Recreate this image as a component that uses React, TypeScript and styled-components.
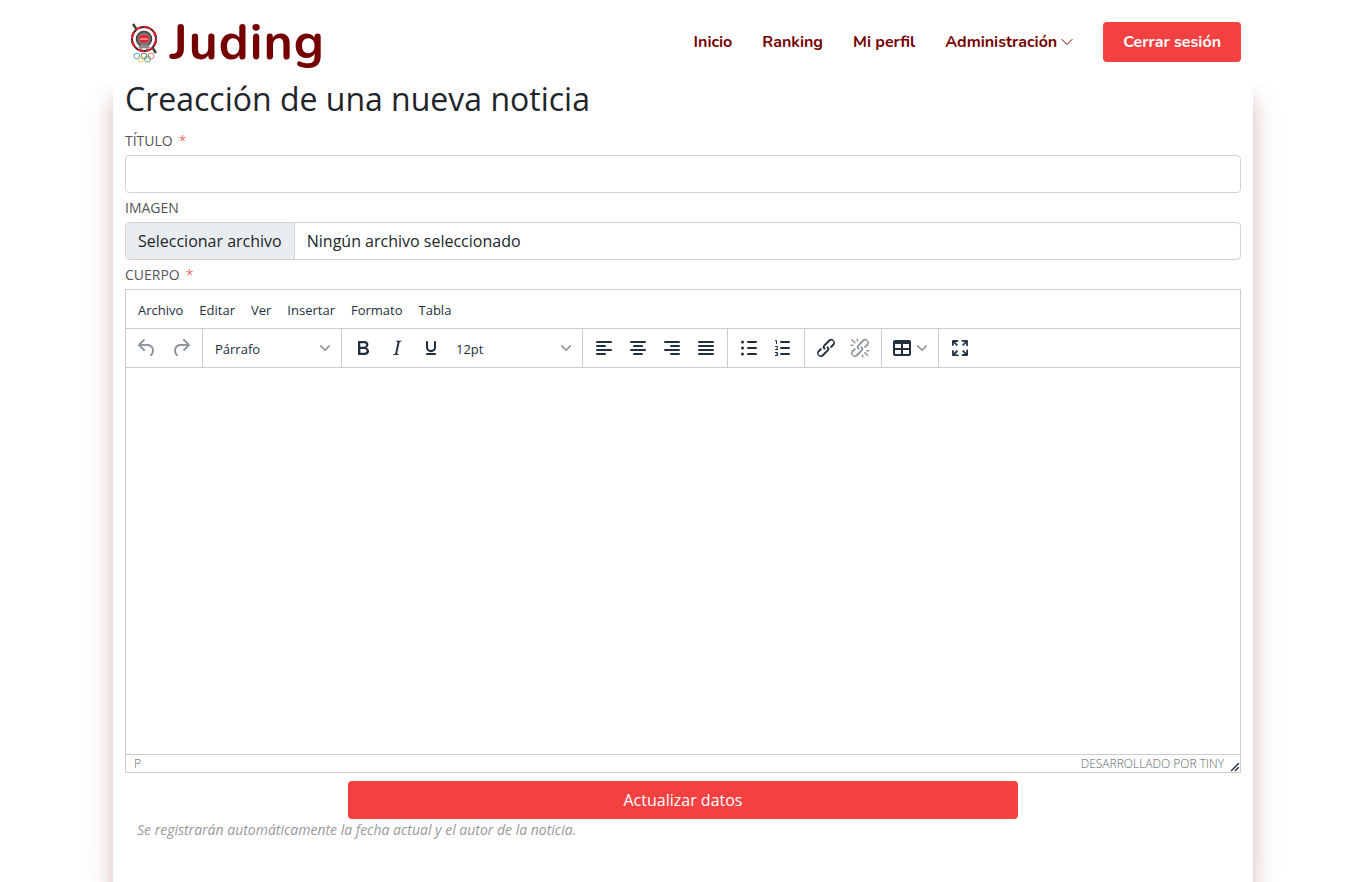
import React from "react";
import styled, { createGlobalStyle } from "styled-components";

const brand = "#750000";
const accent = "#f34141";
const ink = "#222f3e";
const line = "#cccccc";
const body = '"Open Sans", "Noto Sans", sans-serif';
const heading = 'Nunito, Lato, "Open Sans", sans-serif';

const GlobalStyle = createGlobalStyle`
  *, *::before, *::after { box-sizing: border-box; }
  html, body, #root { height: 100%; }
  body { margin: 0; background: #fff; color: #212529; font-family: ${body}; font-size: 16px; line-height: 24px; }
  button, input, select, textarea { font: inherit; color: inherit; }
`;

const Page = styled.div`
  display: flex;
  flex-direction: column;
  min-height: 100%;
  overflow: hidden;
`;

const Header = styled.header`
  position: relative;
  z-index: 1;
  background: #fff;
`;

const HeaderInner = styled.div`
  display: flex;
  align-items: center;
  justify-content: space-between;
  max-width: 1140px;
  height: 84px;
  margin: 0 auto;
  padding: 0 12px;
`;

const Logo = styled.a`
  display: flex;
  align-items: center;
  gap: 9px;
  padding: 2px 0 0 4px;
  color: ${brand};
  font-family: ${heading};
  font-size: 50px;
  font-weight: 700;
  line-height: 60px;
  letter-spacing: 1px;
  text-decoration: none;
`;

const Nav = styled.nav`
  display: flex;
  align-items: center;
  gap: 30px;
  font-family: ${heading};
`;

const NavLink = styled.a`
  display: flex;
  align-items: center;
  gap: 4px;
  color: ${brand};
  font-size: 16px;
  font-weight: 700;
  text-decoration: none;
`;

const LogoutButton = styled.button`
  height: 40px;
  padding: 0 20px;
  border: 0;
  border-radius: 4px;
  background: ${accent};
  color: #fff;
  font-weight: 700;
`;

const Main = styled.main`
  flex: 1;
  width: 100%;
  max-width: 1140px;
  margin: 0 auto;
  padding: 0 12px 40px;
  background: #fff;
  box-shadow: 0 16px 20px rgba(140, 0, 10, 0.26), 0 8px 40px rgba(120, 110, 80, 0.06);
`;

const Title = styled.h1`
  margin: 0 0 12px;
  font-size: 32px;
  font-weight: 400;
  line-height: 30px;
`;

const FieldLabel = styled.label`
  display: block;
  color: #555;
  font-size: 14px;
  line-height: 29px;
  text-transform: uppercase;
`;

const Required = styled.span`
  margin-left: 6px;
  color: #ff2b2b;
  font-weight: 300;
`;

const TextInput = styled.input`
  display: block;
  width: 100%;
  height: 38px;
  padding: 0 12px;
  border: 1px solid #ced4da;
  border-radius: 4px;
  background: #fff;
`;

const FileField = styled.label`
  display: flex;
  height: 38px;
  overflow: hidden;
  border: 1px solid #ced4da;
  border-radius: 4px;
  line-height: 36px;
`;

const HiddenFile = styled.input`
  position: absolute;
  width: 1px;
  height: 1px;
  opacity: 0;
`;

const FileButton = styled.span`
  padding: 0 12px;
  border-right: 1px solid #ced4da;
  background: #e9ecef;
`;

const FileName = styled.span`
  padding: 0 12px;
`;

const Editor = styled.section`
  border: 1px solid ${line};
  color: ${ink};
  font-size: 13px;
`;

const MenuBar = styled.div`
  display: flex;
  gap: 8px;
  height: 39px;
  padding: 0 8px;
  border-bottom: 1px solid ${line};
`;

const MenuButton = styled.button`
  padding: 2px 4px 0;
  border: 0;
  background: none;
`;

const Toolbar = styled.div`
  display: flex;
  height: 39px;
  border-bottom: 1px solid ${line};
`;

const Group = styled.div`
  display: flex;
  align-items: center;
  padding: 0 4px;
  border-right: 1px solid ${line};

  &:last-child { border-right: 0; }
`;

const Tool = styled.button<{ $wide?: boolean }>`
  display: flex;
  align-items: center;
  justify-content: ${(p) => (p.$wide ? "flex-start" : "center")};
  gap: 3px;
  width: ${(p) => (p.$wide ? 48 : 34)}px;
  height: 34px;
  padding: 0 ${(p) => (p.$wide ? 4 : 0)}px;
  border: 0;
  background: none;
  color: ${ink};

  &:disabled { color: rgba(34, 47, 62, 0.5); }
`;

const SelectBox = styled.div`
  display: grid;
  align-items: center;
  width: 130px;

  > * { grid-area: 1 / 1; }
  > svg { justify-self: end; margin-right: 7px; pointer-events: none; }
`;

const Select = styled.select`
  width: 100%;
  height: 34px;
  padding: 2px 8px 0;
  border: 0;
  background: none;
  appearance: none;
`;

const Content = styled.textarea`
  display: block;
  width: 100%;
  height: 386px;
  padding: 16px;
  border: 0;
  outline: 0;
  resize: none;
`;

const StatusBar = styled.div`
  display: flex;
  align-items: center;
  height: 18px;
  padding: 0 0 0 8px;
  border-top: 1px solid ${line};
  color: rgba(34, 47, 62, 0.8);
  font-size: 12px;
  font-weight: 300;
  line-height: 18px;
  text-transform: uppercase;

  > svg { align-self: flex-end; }
`;

const Powered = styled.a`
  margin-left: auto;
  margin-right: 6px;
  color: inherit;
  text-decoration: none;
`;

const Submit = styled.button`
  display: block;
  width: 60%;
  height: 38px;
  margin: 8px auto 0;
  border: 0;
  border-radius: 4px;
  background: ${accent};
  color: #fff;
`;

const Note = styled.p`
  margin: 0;
  padding: 0 12px;
  color: #999;
  font-size: 14px;
  font-style: italic;
  line-height: 22px;
`;

const Icon = ({ d, children }: { d?: string; children?: React.ReactNode }) => (
  <svg width="24" height="24" viewBox="0 0 24 24" fill="currentColor" aria-hidden="true">
    {d && <path d={d} />}
    {children}
  </svg>
);

const Chevron = () => (
  <svg width="10" height="10" viewBox="0 0 10 10" fill="#222f3e" opacity="0.5" aria-hidden="true">
    <path d="M8.7 2.2c.3-.3.8-.3 1 0 .4.4.4.9 0 1.2L5.7 7.8c-.3.3-.9.3-1.2 0L.2 3.4a.8.8 0 0 1 0-1.2c.3-.3.8-.3 1.1 0L5 6l3.7-3.8Z" />
  </svg>
);

const Bars = ({ rows }: { rows: [number, number][] }) => (
  <Icon>
    {rows.map(([x, width], i) => (
      <rect key={i} x={x} y={5 + i * 4} width={width} height="2" rx="1" />
    ))}
  </Icon>
);

const linkPath =
  "M6.2 12.3a1 1 0 0 1 1.4 1.4l-2 2a2 2 0 1 0 2.6 2.8l4.8-4.8a1 1 0 0 0 0-1.4 1 1 0 1 1 1.4-1.3 2.9 2.9 0 0 1 0 4L9.6 20a3.9 3.9 0 0 1-5.5-5.5l2-2Zm11.6-.6a1 1 0 0 1-1.4-1.4l2-2a2 2 0 1 0-2.6-2.8L11 10.3a1 1 0 0 0 0 1.4A1 1 0 1 1 9.6 13a2.9 2.9 0 0 1 0-4L14.4 4a3.9 3.9 0 0 1 5.5 5.5l-2 2Z";

const paths = {
  undo: "M6.4 8H12c3.7 0 6.2 2 6.8 5.1.6 2.7-.4 5.6-2.3 6.8a1 1 0 0 1-1-1.8c1.1-.6 1.8-2.7 1.4-4.6-.5-2.1-2.1-3.5-4.9-3.5H6.4l3.3 3.3a1 1 0 1 1-1.4 1.4l-5-5a1 1 0 0 1 0-1.4l5-5a1 1 0 0 1 1.4 1.4L6.4 8Z",
  redo: "M17.6 10H12c-2.8 0-4.4 1.4-4.9 3.5-.4 2 .3 4 1.4 4.6a1 1 0 1 1-1 1.8c-2-1.2-2.9-4.1-2.3-6.8.6-3 3-5.1 6.8-5.1h5.6l-3.3-3.3a1 1 0 1 1 1.4-1.4l5 5a1 1 0 0 1 0 1.4l-5 5a1 1 0 0 1-1.4-1.4l3.3-3.3Z",
  bold: "M7.8 19c-.3 0-.5 0-.6-.2l-.2-.5V5.7c0-.2 0-.4.2-.5l.6-.2h5c1.5 0 2.7.3 3.5 1 .7.6 1.1 1.4 1.1 2.5a3 3 0 0 1-.6 1.9c-.4.6-1 1-1.6 1.2.4.1.9.3 1.3.6s.8.7 1 1.2c.4.4.5 1 .5 1.6 0 1.3-.4 2.3-1.3 3-.8.7-2.1 1-3.8 1H7.8Zm5-8.3c.6 0 1.2-.1 1.6-.5.4-.3.6-.7.6-1.3 0-1.1-.8-1.7-2.3-1.7H9.3v3.5h3.4Zm.5 6c.7 0 1.3-.1 1.7-.4.4-.4.6-.9.6-1.5s-.2-1-.7-1.4c-.4-.3-1-.4-2-.4H9.4v3.8h4Z",
  italic: "M16.7 4.7l-.1.9h-.3c-.6 0-1 0-1.4.3-.3.3-.4.6-.5 1.1l-2.1 9.8v.6c0 .5.4.8 1.4.8h.2l-.2.8H8l.2-.8h.2c1.1 0 1.8-.5 2-1.5l2-9.8.1-.5c0-.6-.4-.8-1.4-.8h-.3l.2-.9h5.8Z",
  underline: "M16 5c.6 0 1 .4 1 1v5.5a4 4 0 0 1-.4 1.8l-1 1.4a5.3 5.3 0 0 1-5.5 1 5 5 0 0 1-1.6-1c-.5-.4-.8-.9-1.1-1.4a4 4 0 0 1-.4-1.8V6c0-.6.4-1 1-1s1 .4 1 1v5.5c0 .3 0 .6.2 1l.6.7a3.3 3.3 0 0 0 2.2.8 3.4 3.4 0 0 0 2.2-.8c.3-.2.4-.5.6-.8l.2-.9V6c0-.6.4-1 1-1ZM8 17h8c.6 0 1 .4 1 1s-.4 1-1 1H8a1 1 0 0 1 0-2Z",
  unlink: linkPath + "M7.6 6.3a.8.8 0 0 1-1 1.1L3.3 4.2a.7.7 0 1 1 1-1l3.2 3.1ZM5.1 8.6a.8.8 0 0 1 0 1.5H3a.8.8 0 0 1 0-1.5H5Zm5-3.5a.8.8 0 0 1-1.5 0V3a.8.8 0 0 1 1.5 0V5Zm6 11.8a.8.8 0 0 1 1-1l3.2 3.2a.8.8 0 0 1-1 1L16 17Zm-2.2 2a.8.8 0 0 1 1.5 0V21a.8.8 0 0 1-1.5 0V19Zm5-3.5a.7.7 0 1 1 0-1.5H21a.8.8 0 0 1 0 1.5H19Z",
  table: "M19 4a2 2 0 0 1 2 2v12a2 2 0 0 1-2 2H5a2 2 0 0 1-2-2V6c0-1.1.9-2 2-2h14ZM5 14v4h6v-4H5Zm14 0h-6v4h6v-4Zm0-6h-6v4h6V8ZM5 12h6V8H5v4Z",
  fullscreen: "M15.3 10l-1.2-1.3 2.9-3h-2.3a.9.9 0 1 1 0-1.7H19c.5 0 .9.4.9.9v4.4a.9.9 0 1 1-1.8 0V7l-2.9 3Zm0 4l3 3v-2.3a.9.9 0 1 1 1.7 0V19c0 .5-.4.9-.9.9h-4.4a.9.9 0 1 1 0-1.8H17l-3-2.9 1.3-1.2ZM10 15.4l-2.9 3h2.3a.9.9 0 1 1 0 1.7H5a.9.9 0 0 1-.9-.9v-4.4a.9.9 0 1 1 1.8 0V17l2.9-3 1.2 1.3ZM8.7 10L5.7 7v2.3a.9.9 0 0 1-1.7 0V5c0-.5.4-.9.9-.9h4.4a.9.9 0 0 1 0 1.8H7l3 2.9-1.3 1.2Z",
};

const Emblem = () => (
  <svg width="32" height="40" viewBox="0 0 32 40" fill="none" aria-hidden="true">
    <path d="M4 1l4 6M23 24l4 6" stroke="#3e4a35" strokeWidth="2.5" />
    <circle cx="15" cy="16" r="12" fill="#fff" stroke="#2b2b2b" strokeWidth="2" />
    <circle cx="15" cy="16" r="12" stroke="#d5202b" strokeWidth="2.2" strokeDasharray="7 2.4" />
    <path d="M10 6l-4 4v12l4 4h10l4-4V10l-4-4z" fill="#fff" />
    <circle cx="15" cy="16" r="7.5" fill="#777" stroke="#3c3c3c" strokeWidth="1.5" />
    <path d="M9 25l2-3h8l2 3-3 1-3-1-3 1z" fill="#8b8b8b" />
    <path d="M10 13q5-2 10 0v5q-5 3-10 0z" fill="#e32632" />
    <path d="M11 15l1 2 1-2 1 2 1-2 1 2 1-2 1 2 1-2" stroke="#f9b4b8" strokeWidth="0.8" />
    <g strokeWidth="1">
      <circle cx="8" cy="33" r="3" stroke="#5aaee0" />
      <circle cx="15" cy="33" r="3" stroke="#777" />
      <circle cx="22" cy="33" r="3" stroke="#ec7a72" />
      <circle cx="11.500" cy="36" r="3" stroke="#e9cc5c" />
      <circle cx="18.500" cy="36" r="3" stroke="#4fae72" />
    </g>
  </svg>
);

const menus = ["Archivo", "Editar", "Ver", "Insertar", "Formato", "Tabla"];

export default function App() {
  return (
    <Page>
      <GlobalStyle />
      <Header>
        <HeaderInner>
          <Logo href="#">
            <Emblem />
            <span>Juding</span>
          </Logo>
          <Nav>
            <NavLink href="#">Inicio</NavLink>
            <NavLink href="#">Ranking</NavLink>
            <NavLink href="#">Mi perfil</NavLink>
            <NavLink href="#">
              Administración
              <svg width="12" height="12" viewBox="0 0 12 12" fill="none" stroke="currentColor" aria-hidden="true">
                <path d="M1 3.500l5 5 5-5" strokeLinecap="round" strokeLinejoin="round" />
              </svg>
            </NavLink>
            <LogoutButton type="button">Cerrar sesión</LogoutButton>
          </Nav>
        </HeaderInner>
      </Header>
      <Main>
        <Title>Creacción de una nueva noticia</Title>
        <form onSubmit={(e) => e.preventDefault()}>
          <FieldLabel htmlFor="titulo">
            Título<Required>*</Required>
          </FieldLabel>
          <TextInput id="titulo" type="text" />
          <FieldLabel htmlFor="imagen">Imagen</FieldLabel>
          <FileField>
            <HiddenFile id="imagen" type="file" />
            <FileButton>Seleccionar archivo</FileButton>
            <FileName>Ningún archivo seleccionado</FileName>
          </FileField>
          <FieldLabel htmlFor="cuerpo">
            Cuerpo<Required>*</Required>
          </FieldLabel>
          <Editor>
            <MenuBar>
              {menus.map((m) => (
                <MenuButton key={m} type="button">{m}</MenuButton>
              ))}
            </MenuBar>
            <Toolbar>
              <Group>
                <Tool type="button" aria-label="Deshacer" disabled><Icon d={paths.undo} /></Tool>
                <Tool type="button" aria-label="Rehacer" disabled><Icon d={paths.redo} /></Tool>
              </Group>
              <Group>
                <SelectBox>
                  <Select aria-label="Bloque"><option>Párrafo</option></Select>
                  <Chevron />
                </SelectBox>
              </Group>
              <Group>
                <Tool type="button" aria-label="Negrita"><Icon d={paths.bold} /></Tool>
                <Tool type="button" aria-label="Cursiva"><Icon d={paths.italic} /></Tool>
                <Tool type="button" aria-label="Subrayado"><Icon d={paths.underline} /></Tool>
                <SelectBox>
                  <Select aria-label="Tamaño"><option>12pt</option></Select>
                  <Chevron />
                </SelectBox>
              </Group>
              <Group>
                <Tool type="button" aria-label="Alinear a la izquierda"><Bars rows={[[4, 16], [4, 10], [4, 16], [4, 10]]} /></Tool>
                <Tool type="button" aria-label="Centrar"><Bars rows={[[4, 16], [7, 10], [4, 16], [7, 10]]} /></Tool>
                <Tool type="button" aria-label="Alinear a la derecha"><Bars rows={[[4, 16], [10, 10], [4, 16], [10, 10]]} /></Tool>
                <Tool type="button" aria-label="Justificar"><Bars rows={[[4, 16], [4, 16], [4, 16], [4, 16]]} /></Tool>
              </Group>
              <Group>
                <Tool type="button" aria-label="Lista de viñetas">
                  <Icon>
                    {[6, 12, 18].map((y) => (
                      <g key={y}>
                        <circle cx="5.500" cy={y} r="1.500" />
                        <rect x="10" y={y - 1} width="10" height="2" rx="1" />
                      </g>
                    ))}
                  </Icon>
                </Tool>
                <Tool type="button" aria-label="Lista numerada">
                  <Icon>
                    {[6, 12, 18].map((y) => (
                      <rect key={y} x="9" y={y - 1} width="10" height="2" rx="1" />
                    ))}
                    <path d="M4 4.500h1.500V8M4 10.500h2.500v1.500L4.500 13.500h2.500M4 16.500h2.500v3H4M5 18h1.500" fill="none" stroke="currentColor" strokeWidth="1" />
                  </Icon>
                </Tool>
              </Group>
              <Group>
                <Tool type="button" aria-label="Insertar enlace"><Icon d={linkPath} /></Tool>
                <Tool type="button" aria-label="Quitar enlace" disabled><Icon d={paths.unlink} /></Tool>
              </Group>
              <Group>
                <Tool type="button" aria-label="Insertar tabla" $wide><Icon d={paths.table} /><Chevron /></Tool>
              </Group>
              <Group>
                <Tool type="button" aria-label="Pantalla completa"><Icon d={paths.fullscreen} /></Tool>
              </Group>
            </Toolbar>
            <Content id="cuerpo" />
            <StatusBar>
              <span>p</span>
              <Powered href="#">Desarrollado por Tiny</Powered>
              <svg width="10" height="10" viewBox="0 0 10 10" fill={ink} aria-hidden="true">
                <path d="M8.100 1.100A.5.5 0 1 1 9 2l-7 7A.5.5 0 1 1 1 8l7-7ZM8.100 5.100A.5.5 0 1 1 9 6l-3 3A.5.5 0 1 1 5 8l3-3Z" />
              </svg>
            </StatusBar>
          </Editor>
          <Submit type="submit">Actualizar datos</Submit>
          <Note>Se registrarán automáticamente la fecha actual y el autor de la noticia.</Note>
        </form>
      </Main>
    </Page>
  );
}
